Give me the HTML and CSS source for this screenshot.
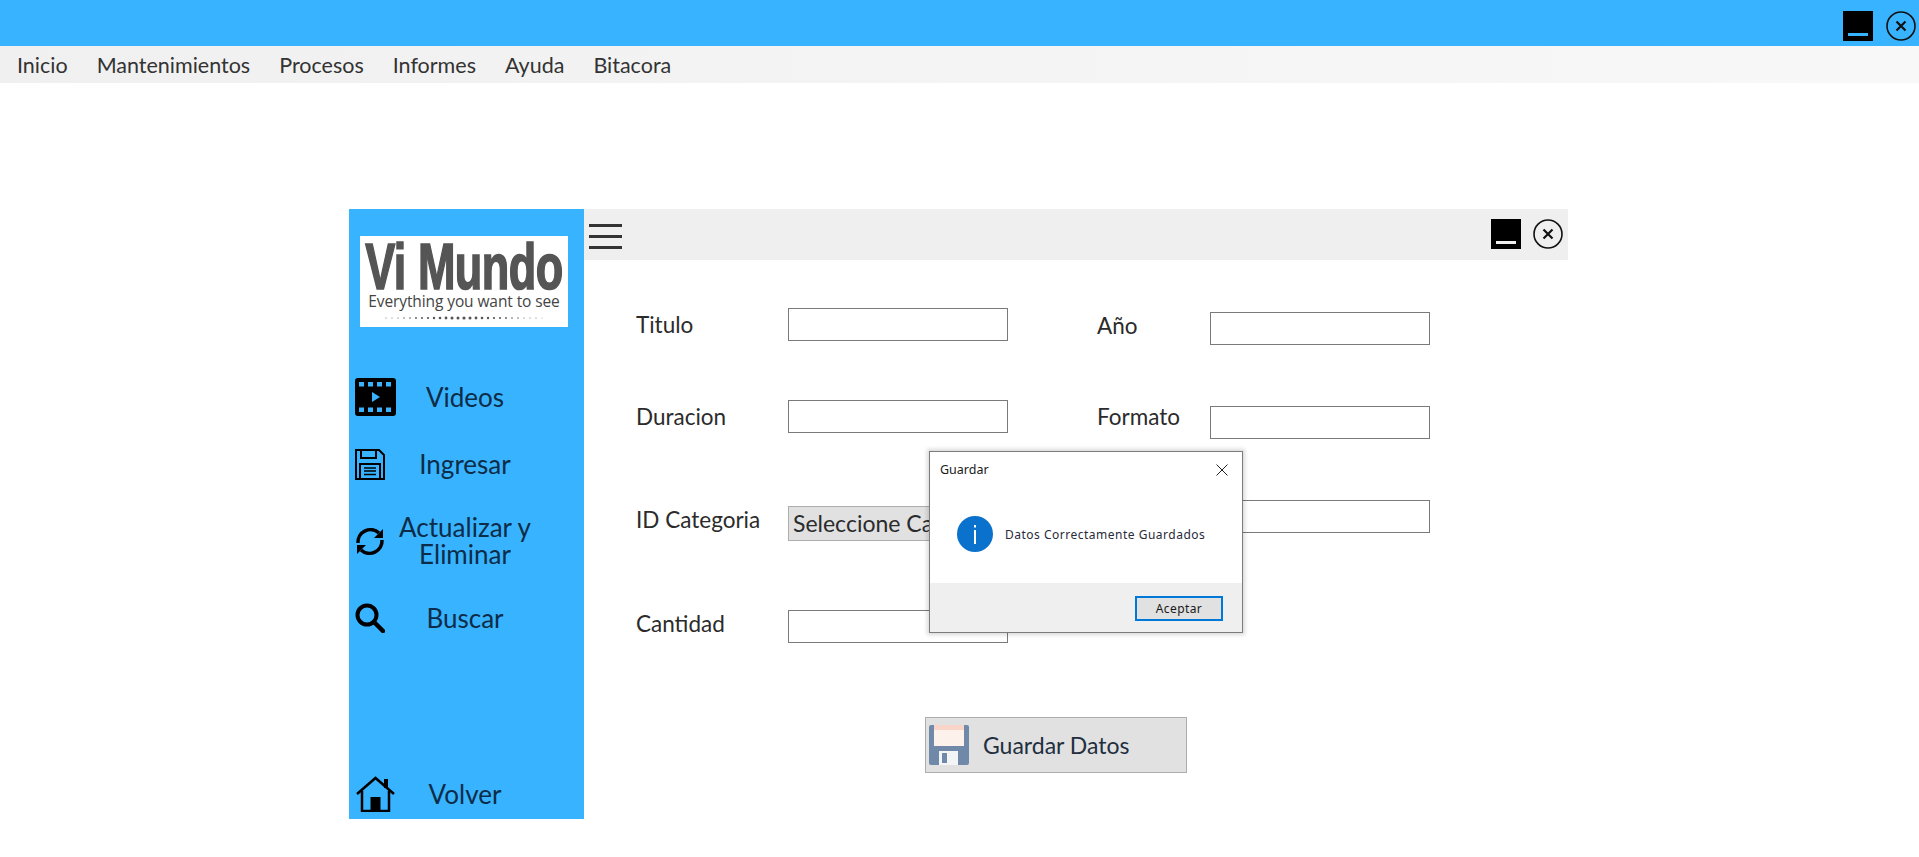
FILE: index.html
```html
<!DOCTYPE html>
<html lang="es">
<head>
    <meta charset="UTF-8">
    <title>Vi Mundo</title>
    <link rel="stylesheet" href="styles.css">
</head>
<body>
    <div class="topbar">
        <span class="btn-min"></span>
        <svg class="btn-close" viewBox="0 0 30 30"><circle cx="15" cy="15" r="14"/><path d="M10.500 10.500l9 9M19.500 10.500l-9 9"/></svg>
    </div>
    <nav class="menu">
        <a>Inicio</a>
        <a>Mantenimientos</a>
        <a>Procesos</a>
        <a>Informes</a>
        <a>Ayuda</a>
        <a>Bitacora</a>
    </nav>

    <div class="window">
        <aside class="sidebar">
            <div class="logo">
                <div class="logo-name">Vi Mundo</div>
                <div class="logo-tag">Everything you want to see</div>
                <svg class="logo-dots" viewBox="0 0 160 4">
                    <circle cx="2" cy="2" r=".5"/><circle cx="8" cy="2" r=".5"/><circle cx="14" cy="2" r=".6"/><circle cx="20" cy="2" r=".7"/><circle cx="26" cy="2" r=".8"/><circle cx="32" cy="2" r=".9"/><circle cx="38" cy="2" r="1"/><circle cx="44" cy="2" r="1.1"/><circle cx="50" cy="2" r="1.2"/><circle cx="56" cy="2" r="1.3"/><circle cx="62" cy="2" r="1.4"/><circle cx="68" cy="2" r="1.5"/><circle cx="74" cy="2" r="1.5"/><circle cx="80" cy="2" r="1.6"/><circle cx="86" cy="2" r="1.5"/><circle cx="92" cy="2" r="1.4"/><circle cx="98" cy="2" r="1.3"/><circle cx="104" cy="2" r="1.2"/><circle cx="110" cy="2" r="1.1"/><circle cx="116" cy="2" r="1"/><circle cx="122" cy="2" r=".9"/><circle cx="128" cy="2" r=".8"/><circle cx="134" cy="2" r=".7"/><circle cx="140" cy="2" r=".6"/><circle cx="146" cy="2" r=".5"/><circle cx="152" cy="2" r=".5"/><circle cx="158" cy="2" r=".4"/>
                </svg>
            </div>

            <a class="side-item item-videos">
                <span class="side-icon">
                    <svg width="41" height="38" viewBox="0 0 41 38">
                        <rect width="41" height="38" rx="3" fill="#000"/>
                        <g fill="#38b3ff">
                            <rect x="4" y="4" width="5" height="4.500"/><rect x="13" y="4" width="5" height="4.500"/><rect x="22" y="4" width="5" height="4.500"/><rect x="31" y="4" width="5" height="4.500"/>
                            <rect x="4" y="29.500" width="5" height="4.500"/><rect x="13" y="29.500" width="5" height="4.500"/><rect x="22" y="29.500" width="5" height="4.500"/><rect x="31" y="29.500" width="5" height="4.500"/>
                            <path d="M17 14l8 5-8 5z"/>
                        </g>
                    </svg>
                </span>
                <span class="side-text">Videos</span>
            </a>
            <a class="side-item item-ingresar">
                <span class="side-icon">
                    <svg width="30" height="31" viewBox="0 0 30 31" fill="none" stroke="#000" stroke-width="2">
                        <path d="M1 1h23l5 5v24H1z"/>
                        <path d="M6 1v8h15V1"/>
                        <path d="M5 30V15h20v15"/>
                        <path d="M9 19h12M9 22h12M9 25.500h12" stroke-width="1.500"/>
                    </svg>
                </span>
                <span class="side-text">Ingresar</span>
            </a>
            <a class="side-item item-actualizar">
                <span class="side-icon">
                    <svg width="30" height="31" viewBox="0 0 30 31" fill="none" stroke="#000" stroke-width="3.500">
                        <path d="M3 17a12.500 12.500 0 0 1 21-10"/>
                        <path d="M27 14a12.500 12.500 0 0 1-21 10"/>
                        <path d="M28 3v9H19z" fill="#000" stroke="none"/>
                        <path d="M2 28v-9h9z" fill="#000" stroke="none"/>
                    </svg>
                </span>
                <span class="side-text">Actualizar y Eliminar</span>
            </a>
            <a class="side-item item-buscar">
                <span class="side-icon">
                    <svg width="30" height="30" viewBox="0 0 30 30" fill="none" stroke="#000">
                        <circle cx="12" cy="12" r="9.500" stroke-width="4"/>
                        <path d="M19 19l9 9" stroke-width="4.500" stroke-linecap="round"/>
                    </svg>
                </span>
                <span class="side-text">Buscar</span>
            </a>
            <a class="side-item item-volver">
                <span class="side-icon">
                    <svg width="39" height="36" viewBox="0 0 39 36" fill="none" stroke="#000" stroke-width="2.500">
                        <path d="M1 18L19.500 2 38 18"/>
                        <path d="M6 15v20h27V15"/>
                        <path d="M28 3h4v9h-4z" fill="#000" stroke="none"/>
                        <rect x="14.500" y="21" width="10" height="14" fill="#000" stroke="none"/>
                    </svg>
                </span>
                <span class="side-text">Volver</span>
            </a>
        </aside>

        <main class="panel">
            <div class="panel-head">
                <div class="burger"><span></span><span></span><span></span></div>
                <span class="btn-min btn-min-gray"></span>
                <svg class="btn-close" viewBox="0 0 30 30"><circle cx="15" cy="15" r="14"/><path d="M10.500 10.500l9 9M19.500 10.500l-9 9"/></svg>
            </div>

            <div class="form">
                <div class="form-col col-left">
                    <div class="field"><label>Titulo</label><input type="text"></div>
                    <div class="field"><label>Duracion</label><input type="text"></div>
                    <div class="field field-select"><label>ID Categoria</label><div class="select">Seleccione Categoria</div></div>
                    <div class="field field-qty"><label>Cantidad</label><input type="text"></div>
                </div>
                <div class="form-col col-right">
                    <div class="field field-up"><label>Año</label><input type="text"></div>
                    <div class="field field-up-more"><label>Formato</label><input type="text"></div>
                    <div class="field"><label></label><input type="text"></div>
                </div>
            </div>

            <button class="save-btn">
                <svg width="40" height="40" viewBox="0 0 40 40">
                    <path d="M2 0h36a2 2 0 0 1 2 2v36a2 2 0 0 1-2 2H2a2 2 0 0 1-2-2V2a2 2 0 0 1 2-2z" fill="#7189a8"/>
                    <rect x="5" y="0" width="30" height="5" fill="#f9d5c9"/>
                    <rect x="5" y="5" width="30" height="16" fill="#fdf1ec"/>
                    <rect x="10" y="26" width="19" height="14" fill="#f2f4f6"/>
                    <rect x="13" y="28" width="5" height="10" fill="#7189a8"/>
                </svg>
                <span>Guardar Datos</span>
            </button>
        </main>
    </div>

    <div class="dialog">
        <div class="dialog-body">
            <div class="dialog-title">
                <span>Guardar</span>
                <svg width="12" height="12" viewBox="0 0 12 12"><path d="M.5.5l11 11M11.500.5l-11 11" stroke="#222" fill="none"/></svg>
            </div>
            <div class="dialog-msg">
                <svg width="36" height="36" viewBox="0 0 36 36">
                    <circle cx="18" cy="18" r="18" fill="#0a72cc"/>
                    <rect x="17" y="14" width="2" height="14" fill="#fff"/>
                    <rect x="17" y="9" width="2" height="2.500" fill="#fff"/>
                </svg>
                <span>Datos Correctamente Guardados</span>
            </div>
        </div>
        <div class="dialog-foot">
            <button class="dialog-ok">Aceptar</button>
        </div>
    </div>
</body>
</html>
```

FILE: styles.css
```css
body {
    margin: 0;
    background: #fff;
    font-family: "Lato", "Open Sans", sans-serif;
    color: #222;
}

.topbar {
    height: 46px;
    background: #38b3ff;
    display: flex;
    justify-content: flex-end;
    align-items: flex-start;
    gap: 13px;
    padding: 11px 3px 0 0;
    box-sizing: border-box;
}

.btn-min {
    width: 30px;
    height: 30px;
    background: #000;
    display: flex;
    justify-content: center;
    align-items: flex-end;
    padding-bottom: 5px;
    box-sizing: border-box;
}
.btn-min::after {
    content: "";
    width: 20px;
    height: 3px;
    background: #38b3ff;
}
.btn-min-gray::after {
    background: #efefef;
}

.btn-close {
    width: 30px;
    height: 30px;
    flex: none;
    fill: none;
    stroke: #111;
    stroke-width: 1.600;
}
.btn-close path {
    stroke-width: 2.200;
}

.menu {
    height: 37px;
    background: linear-gradient(to right, #f0f0f0, #f8f8f8);
    display: flex;
    align-items: center;
    gap: 29px;
    padding-left: 17px;
    font-size: 21.500px;
    color: #333;
}

.window {
    display: flex;
    width: 1219px;
    height: 610px;
    margin: 126px 0 0 349px;
}

.sidebar {
    width: 235px;
    flex: none;
    background: #38b3ff;
    display: flex;
    flex-direction: column;
    padding-top: 27px;
    box-sizing: border-box;
}

.logo {
    width: 208px;
    height: 91px;
    margin-left: 11px;
    background: #fff;
    color: #555;
    text-align: center;
    overflow: hidden;
    flex: none;
}
.logo-name {
    font-family: "Liberation Sans", sans-serif;
    font-weight: 700;
    font-size: 45px;
    line-height: 36px;
    white-space: nowrap;
    letter-spacing: -.5px;
    margin-top: 5px;
    -webkit-text-stroke: 1.200px #555;
    transform: scaleY(1.45);
    transform-origin: top;
}
.logo-tag {
    font-family: "Open Sans", sans-serif;
    font-size: 15.500px;
    line-height: 18px;
    letter-spacing: -.1px;
    white-space: nowrap;
    margin-top: 15px;
    color: #444;
}
.logo-dots {
    display: block;
    width: 160px;
    height: 4px;
    margin: 6px auto 0;
    fill: #555;
}

.side-item {
    display: flex;
    align-items: center;
    height: 66px;
    padding-left: 6px;
    flex: none;
}
.item-videos {
    margin-top: 37px;
}
.item-ingresar {
    margin-top: 1px;
}
.item-actualizar,
.item-buscar {
    margin-top: 11px;
}
.item-volver {
    margin-top: auto;
    margin-bottom: -8px;
    padding-left: 7px;
}
.side-icon {
    width: 42px;
    flex: none;
    display: flex;
    align-items: center;
}
.item-volver .side-icon {
    width: 41px;
}
.side-icon svg {
    display: block;
}
.side-text {
    width: 136px;
    text-align: center;
    font-size: 26px;
    line-height: 27px;
    color: #0d2c47;
}

.panel {
    flex: 1;
}

.panel-head {
    height: 51px;
    background: #efefef;
    display: flex;
    align-items: flex-start;
    gap: 12px;
    padding: 10px 5px 0 5px;
    box-sizing: border-box;
}
.burger {
    width: 33px;
    margin: 5px auto 0 0;
    display: flex;
    flex-direction: column;
    gap: 8px;
}
.burger span {
    height: 3px;
    background: #333;
}

.form {
    display: flex;
    gap: 89px;
    padding: 48px 0 0 52px;
}
.form-col {
    display: flex;
    flex-direction: column;
    flex: none;
}
.col-left {
    gap: 59px;
}
.col-right {
    padding-top: 4px;
    gap: 61px;
}

.field {
    display: flex;
    align-items: center;
    height: 33px;
    font-size: 22.500px;
    color: #2b2b2b;
}
.field label {
    width: 152px;
    flex: none;
}
.col-right .field label {
    width: 113px;
}
.field-select {
    height: 35px;
    margin-top: 14px;
}
.field-qty {
    margin-top: 10px;
}
.field-select label {
    margin-bottom: 8px;
}
.field-qty label {
    margin-bottom: 6px;
}
.field-up label {
    margin-bottom: 7px;
}
.field-up-more label {
    margin-bottom: 12px;
}
.field input {
    width: 220px;
    height: 33px;
    box-sizing: border-box;
    border: 1px solid #7a7a7a;
    background: #fff;
    margin: 0;
    padding: 0;
}
.select {
    width: 220px;
    height: 35px;
    box-sizing: border-box;
    border: 1px solid #adadad;
    background: #e1e1e1;
    padding: 0 4px;
    font-size: 23px;
    line-height: 33px;
    white-space: nowrap;
    overflow: hidden;
}

.save-btn {
    display: flex;
    align-items: center;
    width: 262px;
    height: 56px;
    margin: 74px 0 0 341px;
    padding: 0 0 0 3px;
    box-sizing: border-box;
    border: 1px solid #adadad;
    background: #e1e1e1;
    font-family: inherit;
    font-size: 23px;
    color: #1f2f3f;
}
.save-btn span {
    margin-left: 14px;
}

/* message box over the form */
.dialog {
    position: absolute;
    left: 929px;
    top: 451px;
    width: 314px;
    height: 182px;
    box-sizing: border-box;
    border: 1px solid #7c7c7c;
    background: #fff;
    box-shadow: 0 0 4px 2px rgba(0, 0, 0, 0.15);
    display: flex;
    flex-direction: column;
    font-family: "Noto Sans", "Open Sans", sans-serif;
    font-size: 12px;
    color: #1a1a1a;
}
.dialog-body {
    flex: 1;
    padding: 0 14px 0 10px;
}
.dialog-title {
    display: flex;
    justify-content: space-between;
    align-items: center;
    height: 35px;
    font-size: 12.500px;
}
.dialog-msg {
    display: flex;
    align-items: center;
    gap: 12px;
    margin: 29px 0 0 17px;
    font-size: 12px;
    letter-spacing: .5px;
    color: #2a2a3a;
}
.dialog-foot {
    height: 49px;
    background: #efefef;
    display: flex;
    justify-content: flex-end;
    padding: 13px 19px 0 0;
    box-sizing: border-box;
}
.dialog-ok {
    width: 88px;
    height: 25px;
    box-sizing: border-box;
    border: 2px solid #0078d7;
    background: #e1e1e1;
    font-family: inherit;
    font-size: 12px;
    letter-spacing: .4px;
    color: #1a1a1a;
    padding: 0;
}
```
